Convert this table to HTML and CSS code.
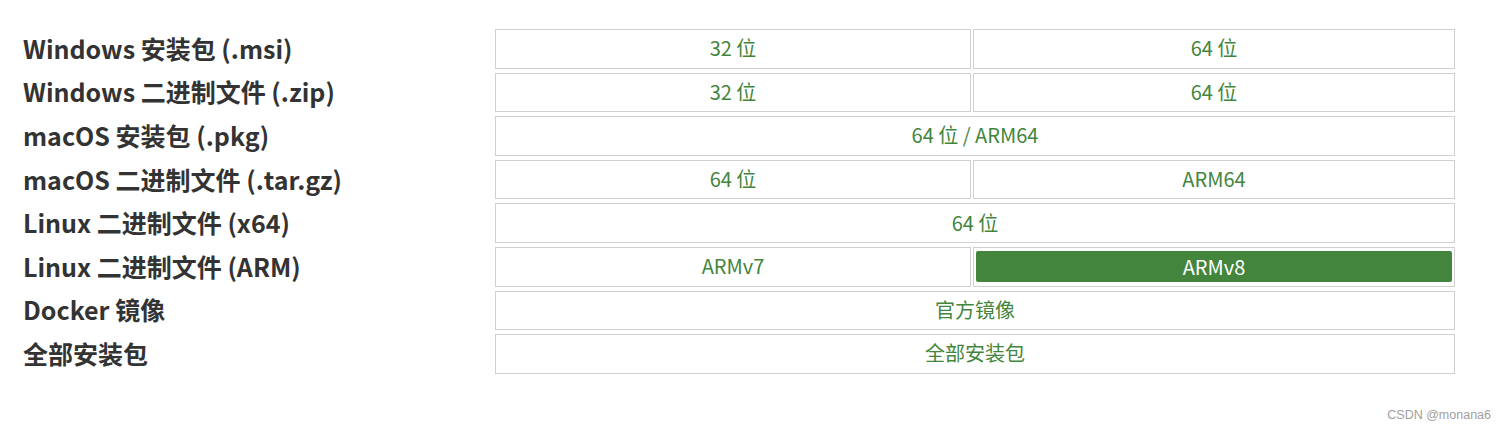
FILE: index.html
```html
<!DOCTYPE html>
<html>
<head>
  <title>下载 Node.js</title>
  <link rel="stylesheet" href="styles.css">
</head>
<body>
  <main class="downloads">
    <div class="label">Windows 安装包 (.msi)</div>
    <a class="cell" href="#">32 位</a>
    <a class="cell" href="#">64 位</a>

    <div class="label">Windows 二进制文件 (.zip)</div>
    <a class="cell" href="#">32 位</a>
    <a class="cell" href="#">64 位</a>

    <div class="label">macOS 安装包 (.pkg)</div>
    <a class="cell wide" href="#">64 位 / ARM64</a>

    <div class="label">macOS 二进制文件 (.tar.gz)</div>
    <a class="cell" href="#">64 位</a>
    <a class="cell" href="#">ARM64</a>

    <div class="label">Linux 二进制文件 (x64)</div>
    <a class="cell wide" href="#">64 位</a>

    <div class="label">Linux 二进制文件 (ARM)</div>
    <a class="cell" href="#">ARMv7</a>
    <a class="cell" href="#"><span class="active">ARMv8</span></a>

    <div class="label">Docker 镜像</div>
    <a class="cell wide" href="#">官方镜像</a>

    <div class="label">全部安装包</div>
    <a class="cell wide" href="#">全部安装包</a>
  </main>
  <div class="mark">CSDN @monana6</div>
</body>
</html>
```

FILE: styles.css
```css
body {
  margin: 0;
  padding: 0;
  font-family: "Noto Sans CJK SC", "Noto Sans", sans-serif;
  background-color: #fff;
  color: #333;
  height: 430px;
  position: relative;
}
.downloads {
  display: grid;
  grid-template-columns: 470px 476px 482px;
  grid-auto-rows: 39.6px;
  column-gap: 2px;
  row-gap: 4px;
  padding: 29px 0 0 23px;
}
.label {
  grid-column: 1;
  display: flex;
  align-items: center;
  font-size: 25px;
  font-weight: 700;
  color: #333;
  padding-bottom: 2px;
}
.cell {
  display: flex;
  align-items: center;
  justify-content: center;
  border: 1px solid #d0d0d0;
  color: #43853d;
  font-size: 20px;
  text-decoration: none;
  box-sizing: border-box;
  padding-bottom: 2px;
}
.cell.wide {
  grid-column: 2 / 4;
}
.cell .active {
  flex: 1;
  align-self: stretch;
  display: flex;
  align-items: center;
  justify-content: center;
  margin: 3px 2px 2px 2px;
  background-color: #43853d;
  color: #fff;
  border-radius: 2px;
}
.mark {
  position: absolute;
  right: 15px;
  bottom: 8px;
  font-family: "Liberation Sans", Arial, sans-serif;
  font-size: 12.5px;
  color: #a0a0a0;
}
```
